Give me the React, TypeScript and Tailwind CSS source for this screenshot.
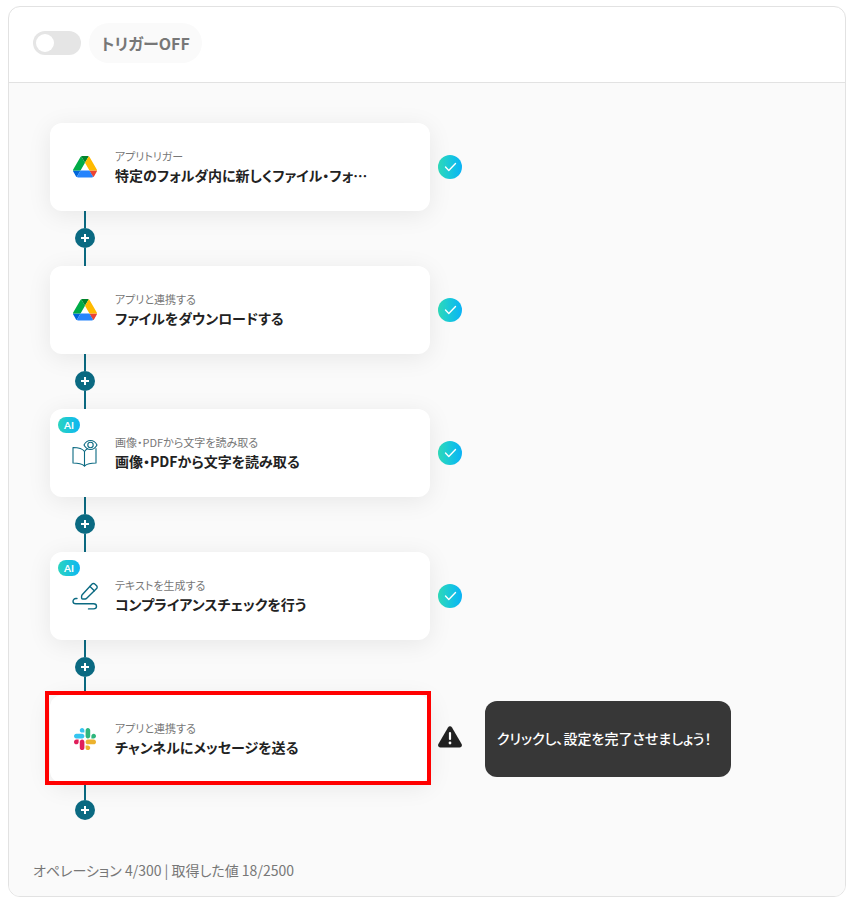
import { useState } from 'react'
import type { ReactNode } from 'react'

type Step = {
  id: number
  label: string
  title: string
  icon: ReactNode
  ai?: boolean
  done: boolean
}

function DriveIcon() {
  return (
    <svg viewBox="0 0 87.3 78" className="w-6" aria-hidden="true">
      <path d="m6.6 66.85 3.85 6.65c.8 1.4 1.95 2.5 3.3 3.3l13.75-23.8h-27.5c0 1.55.4 3.1 1.2 4.5z" fill="#0066da" />
      <path d="m43.65 25-13.75-23.8c-1.35.8-2.5 1.9-3.3 3.3l-25.4 44a9.06 9.06 0 0 0 -1.2 4.5h27.5z" fill="#00ac47" />
      <path d="m73.55 76.8c1.35-.8 2.5-1.9 3.3-3.3l1.6-2.75 7.65-13.25c.8-1.4 1.2-2.95 1.2-4.5h-27.502l5.852 11.5z" fill="#ea4335" />
      <path d="m43.65 25 13.75-23.8c-1.35-.8-2.9-1.2-4.5-1.2h-18.5c-1.6 0-3.15.45-4.5 1.2z" fill="#00832d" />
      <path d="m59.8 53h-32.3l-13.75 23.8c1.35.8 2.9 1.2 4.5 1.2h50.8c1.6 0 3.15-.45 4.5-1.2z" fill="#2684fc" />
      <path d="m73.4 26.5-12.7-22c-.8-1.4-1.95-2.5-3.3-3.3l-13.75 23.8 16.15 28h27.45c0-1.55-.4-3.1-1.2-4.5z" fill="#ffba00" />
    </svg>
  )
}

function SlackIcon() {
  return (
    <svg viewBox="0 0 122.8 122.8" className="w-[22px]" aria-hidden="true">
      <path d="M25.8 77.6c0 7.1-5.8 12.9-12.9 12.9S0 84.7 0 77.6s5.8-12.9 12.9-12.9h12.9v12.9zm6.5 0c0-7.1 5.8-12.9 12.9-12.9s12.9 5.8 12.9 12.9v32.3c0 7.1-5.8 12.9-12.9 12.9s-12.9-5.8-12.9-12.9V77.6z" fill="#e01e5a" />
      <path d="M45.2 25.8c-7.1 0-12.9-5.8-12.9-12.9S38.1 0 45.2 0s12.9 5.8 12.9 12.9v12.9H45.2zm0 6.5c7.1 0 12.9 5.8 12.9 12.9s-5.8 12.9-12.9 12.9H12.9C5.8 58.1 0 52.3 0 45.2s5.8-12.9 12.9-12.9h32.3z" fill="#36c5f0" />
      <path d="M97 45.2c0-7.1 5.8-12.9 12.9-12.9s12.9 5.8 12.9 12.9-5.8 12.9-12.9 12.9H97V45.2zm-6.5 0c0 7.1-5.8 12.9-12.9 12.9s-12.9-5.8-12.9-12.9V12.9C64.7 5.8 70.5 0 77.6 0s12.9 5.8 12.9 12.9v32.3z" fill="#2eb67d" />
      <path d="M77.6 97c7.1 0 12.9 5.8 12.9 12.9s-5.8 12.9-12.9 12.9-12.9-5.8-12.9-12.9V97h12.9zm0-6.5c-7.1 0-12.9-5.8-12.9-12.9s5.8-12.9 12.9-12.9h32.3c7.1 0 12.9 5.8 12.9 12.9s-5.8 12.9-12.9 12.9H77.6z" fill="#ecb22e" />
    </svg>
  )
}

function BookEyeIcon() {
  return (
    <svg viewBox="0 0 26 28" className="w-[26px]" fill="none" stroke="#0b6a82" strokeWidth="1.1" strokeLinejoin="round" strokeLinecap="round" aria-hidden="true">
      <path d="M12.500 12.5C10.500 9.5 6 8.500 1 8.500V24c5 0 9 .8 11.500 3 2.500-2.200 6.500-3 11.500-3V9.500" />
      <path d="M12.500 12.500V27M12.500 12.500c.8-1.300 1.800-2.200 3-2.800" />
      <path d="M12 6C13.500 3 15.700 1.500 18.500 1.500S23.500 3 25 6C23.500 8.900 21.300 10.500 18.500 10.500S13.500 8.900 12 6z" />
      <circle cx="18.500" cy="6" r="2.700" />
    </svg>
  )
}

function PencilIcon() {
  return (
    <svg viewBox="0 0 26 28" className="w-[26px]" fill="none" stroke="#0b6a82" strokeWidth="1.4" strokeLinejoin="round" strokeLinecap="round" aria-hidden="true">
      <path d="m10.200 12.700 9.900-10.600a1.900 1.900 0 0 1 2.700 0l1.800 1.700a1.900 1.900 0 0 1 0 2.700L14.700 16.300a2.400 2.400 0 0 1-1.500.7H10.600a1 1 0 0 1-1-1V14.200a2.400 2.400 0 0 1 .6-1.500z" />
      <path d="m18 4.600 4.300 4.200" />
      <path d="M5 16.500h-.9a2.800 2.800 0 0 0-3.100 2.700c0 1.500 1.200 2.600 3 2.600H21.500c1.900 0 3 .9 3 2.500S23.400 26.900 21.500 26.900h-5" />
    </svg>
  )
}

function WarningIcon() {
  return (
    <svg viewBox="0 0 24 26" className="w-6 shrink-0" role="img" aria-label="未設定">
      <path d="M10 1.400a2.400 2.400 0 0 1 4 0L23.600 18c.9 1.800 0 3.500-2 3.500H2.400c-2 0-2.900-1.700-2-3.500z" fill="#222" />
      <path d="M12 7v6" stroke="#fff" strokeWidth="2.200" strokeLinecap="round" />
      <circle cx="12" cy="17" r="1.400" fill="#fff" />
    </svg>
  )
}

function DoneIcon() {
  return (
    <span className="flex size-6 shrink-0 items-center justify-center rounded-full bg-linear-to-r from-[#2fdcba] to-[#0cb2f6]">
      <svg viewBox="0 0 24 24" className="size-6" fill="none" stroke="#fff" strokeWidth="1.4" strokeLinecap="round" strokeLinejoin="round" role="img" aria-label="設定済み">
        <path d="m7.500 12 3.300 3.500L17.500 8.500" />
      </svg>
    </span>
  )
}

const steps: Step[] = [
  { id: 1, label: 'アプリトリガー', title: '特定のフォルダ内に新しくファイル・フォ…', icon: <DriveIcon />, done: true },
  { id: 2, label: 'アプリと連携する', title: 'ファイルをダウンロードする', icon: <DriveIcon />, done: true },
  { id: 3, label: '画像・PDFから文字を読み取る', title: '画像・PDFから文字を読み取る', icon: <BookEyeIcon />, ai: true, done: true },
  { id: 4, label: 'テキストを生成する', title: 'コンプライアンスチェックを行う', icon: <PencilIcon />, ai: true, done: true },
  { id: 5, label: 'アプリと連携する', title: 'チャンネルにメッセージを送る', icon: <SlackIcon />, done: false },
]

function StepCard({ step }: { step: Step }) {
  return (
    <div className="flex items-center gap-2">
      <div className="relative w-[380px]">
        <button
          type="button"
          className="flex h-[88px] w-full items-center gap-[15px] rounded-xl bg-white pl-5 text-left shadow-[0_4px_24px_rgba(0,0,0,0.08)]"
        >
          <span className="flex w-[30px] shrink-0 justify-center">{step.icon}</span>
          <span className="flex min-w-0 flex-col pb-[2px]">
            <span className="text-[11px] leading-[18px] text-[#777]">{step.label}</span>
            <span className="text-sm font-bold text-[#222]">{step.title}</span>
          </span>
        </button>

        {step.ai && (
          <span className="absolute top-2 left-2 flex h-4 w-[22px] items-center justify-center rounded-full bg-linear-to-r from-[#2bd4bf] to-[#10b5f2] font-[Lato,sans-serif] text-[10px] font-bold text-white">
            AI
          </span>
        )}

        {!step.done && (
          <div className="pointer-events-none absolute -top-1 -right-px -bottom-[2px] -left-[5px] border-4 border-[#ff0000]" />
        )}
      </div>

      {step.done ? (
        <DoneIcon />
      ) : (
        <div className="flex items-center gap-[23px]">
          <WarningIcon />
          <p className="w-[246px] rounded-xl bg-[#373737] px-3 pt-[27px] pb-[29px] text-sm font-medium text-white">
            クリックし、設定を完了させましょう！
          </p>
        </div>
      )}
    </div>
  )
}

function Connector({ last }: { last: boolean }) {
  return (
    <div className="flex w-[70px] flex-col items-center">
      <span className="h-[17px] w-[2px] bg-[#0b6a82]" />
      <button
        type="button"
        aria-label="ステップを追加"
        className="flex size-5 items-center justify-center rounded-full bg-[#0b6a82]"
      >
        <svg viewBox="0 0 8 8" className="size-2" stroke="#fff" strokeWidth="2" aria-hidden="true">
          <path d="M4 0v8M0 4h8" />
        </svg>
      </button>
      {!last && <span className="h-[18px] w-[2px] bg-[#0b6a82]" />}
    </div>
  )
}

export default function App() {
  const [enabled, setEnabled] = useState(false)

  return (
    <div
      lang="ja"
      className="bg-white px-2 py-[6px] pr-1 font-['Noto_Sans_CJK_JP',sans-serif] [font-feature-settings:'palt']"
    >
      <div className="overflow-hidden rounded-xl border border-[#e2e2e2]">
        <header className="border-b border-[#e2e2e2] px-6 pt-4 pb-[19px]">
          <label className="flex items-center gap-2">
            <input
              type="checkbox"
              role="switch"
              checked={enabled}
              onChange={(e) => setEnabled(e.target.checked)}
              className="peer sr-only"
            />
            <span className="flex h-6 w-12 items-center rounded-full bg-[#e5e5e5] px-[3px] peer-checked:justify-end peer-checked:bg-[#0b6a82]">
              <span className="size-[18px] rounded-full bg-white" />
            </span>
            <span className="flex h-10 items-center rounded-full bg-[#fafafa] px-3 font-bold text-[#777]">
              {enabled ? 'トリガーON' : 'トリガーOFF'}
            </span>
          </label>
        </header>

        <main className="bg-[#fafafa] pt-10 pr-6 pl-[41px]">
          {steps.map((step, i) => (
            <div key={step.id}>
              <StepCard step={step} />
              <Connector last={i === steps.length - 1} />
            </div>
          ))}
        </main>

        <footer className="bg-[#fafafa] px-6 pt-10 pb-4 text-sm text-[#777]">
          オペレーション 4/300 | 取得した値 18/2500
        </footer>
      </div>
    </div>
  )
}
